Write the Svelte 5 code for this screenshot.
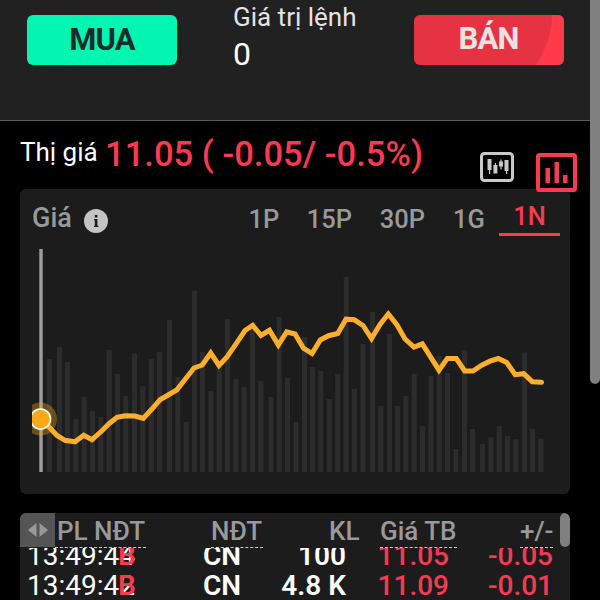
<script lang="ts">
    interface Trade {
        time: string;
        side: string;
        investor: string;
        volume: string;
        price: string;
        change: string;
    }

    const ranges: string[] = ["1P", "15P", "30P", "1G", "1N"];
    let activeRange: string = "1N";

    const trades: Trade[] = [
        { time: "13:49:44", side: "B", investor: "CN", volume: "100", price: "11.05", change: "-0.05" },
        { time: "13:49:42", side: "B", investor: "CN", volume: "4.8 K", price: "11.09", change: "-0.01" },
    ];

    const baseline = 472;

    // [x, top] of each volume bar
    const volumes: number[][] = [
        [47, 359], [57, 347], [65, 362], [73.3, 419], [81.7, 397], [90, 411], [98.3, 417],
        [106.7, 350], [115, 374], [123.3, 396], [132, 353.5], [140.3, 386], [148.7, 359],
        [157, 352], [167, 320], [175.3, 377], [183.7, 422], [192, 290.5], [200, 352],
        [208.4, 391], [216.7, 366], [225, 319], [233.4, 379], [241.7, 387], [250, 327],
        [258.4, 381], [268.4, 397], [276.7, 317], [285, 378], [293.5, 422], [302, 337],
        [310, 367], [318.4, 371], [326.7, 399], [335.2, 374], [343.6, 277], [352, 389],
        [360.4, 344], [370, 312], [378.3, 406], [387, 334], [395, 406], [403.4, 396],
        [411.7, 374], [420, 426], [428.4, 376], [436.7, 356], [445, 373], [453.4, 449],
        [462, 350.5], [470, 429], [480, 444], [488.4, 437.5], [496.7, 426], [505, 436],
        [513.4, 439], [522, 352.5], [530, 429], [538.4, 439],
    ];

    const prices: number[][] = [
        [40.5, 419], [50, 428], [57, 435.5], [65, 440.3], [75, 441.8], [83.7, 435.3], [92, 439.7],
        [101.7, 431], [109, 423.7], [117, 417.3], [125, 415.7], [135, 416], [143.3, 418.4],
        [151.7, 409.3], [160, 399.8], [176.7, 390], [185, 379.5], [194, 368], [202.3, 365],
        [210.7, 353], [219, 365.5], [227, 357], [235.7, 344.3], [245, 330.5], [252.7, 325.3],
        [261, 335.5], [269.5, 330.3], [278.3, 345], [286.7, 331.8], [295, 334], [303.5, 348.3],
        [312, 353.5], [320.3, 340], [328.5, 335.7], [337.7, 333.5], [346, 319.2], [354.3, 319.8],
        [363, 325.5], [371.5, 338.5], [380, 324.5], [388.3, 314], [397, 325], [405, 339],
        [414, 347], [422.3, 343.8], [439, 370.2], [447.3, 358.5], [456.3, 358.5], [464.7, 371],
        [473, 371], [481.7, 365.2], [490, 361.2], [498.3, 358.5], [506.7, 362.5], [515.2, 374.7],
        [523.7, 373.7], [532.3, 381.7], [541.5, 382.3],
    ];

    const line: string = prices.map((p) => p.join(",")).join(" ");
</script>

<div class="page">
    <header class="order">
        <button class="buy">MUA</button>
        <div class="total">
            <span class="total-label">Giá trị lệnh</span>
            <span class="total-value">0</span>
        </div>
        <button class="sell">
            <svg viewBox="0 0 150 50">
                <path d="M138 0 Q138 25 122 50 H150 V0Z" fill="#ff3b4b" />
            </svg>
            <span>BÁN</span>
        </button>
    </header>

    <div class="market">
        <span class="market-label">Thị giá</span>
        <span class="market-price">11.05 ( -0.05/ -0.5%)</span>
        <div class="views">
            <svg class="candles" viewBox="0 0 34 30">
                <rect x="1.5" y="1.5" width="31" height="27" rx="3" fill="none" stroke="#c9c9c9" stroke-width="3" />
                <path
                    d="M7.5 7h4v11h-4zM9 7h1.2v15H9zM13.4 13h4v8.5h-4zM14.8 11h1.2v3h-1.2zM19 9.5h4v5h-4zM20.4 7.5h1.2v10h-1.2zM24.5 8h4v11h-4zM26 8h1.2v14H26z"
                    fill="#c9c9c9"
                />
            </svg>
            <svg class="columns" viewBox="0 0 41 39">
                <rect x="2" y="2" width="37" height="35" rx="1.5" fill="none" stroke="#f93b51" stroke-width="4" />
                <path d="M9.5 15H14v15H9.5zM18.500 9H23v21h-4.500zM27 22h4.500v8H27z" fill="#f93b51" />
            </svg>
        </div>
    </div>

    <section class="card">
        <div class="card-head">
            <span class="card-title">Giá</span>
            <svg class="info" viewBox="0 0 24 24">
                <circle cx="12" cy="12" r="12" fill="#c4c4c4" />
                <path d="M10.8 6h2.600v2.500h-2.600zM10 10h3.400v6.800h1V18H10v-1.200h.8v-5.500H10z" fill="#1c1c1c" />
            </svg>
            <nav>
                {#each ranges as range}
                    <button class:active={range === activeRange} on:click={() => (activeRange = range)}>
                        {range}
                    </button>
                {/each}
            </nav>
        </div>
        <svg class="chart" viewBox="32 245 528 235">
            {#each volumes as [x, top]}
                <rect {x} y={top} width="5" height={baseline - top} fill="#2c2c2c" />
            {/each}
            <rect x="39.3" y="249" width="3.4" height="223" fill="#9d9d9d" />
            <circle cx="40.5" cy="419" r="16.5" fill="#fba919" opacity="0.35" />
            <polyline points={line} fill="none" stroke="#fcae2c" stroke-width="5" stroke-linecap="round" />
            <circle cx="40.5" cy="419" r="10" fill="#fba919" stroke="#fff" stroke-width="1.6" />
        </svg>
    </section>

    <section class="trades">
        <div class="trades-head">
            <div class="toggle">
                <svg viewBox="0 0 20 14">
                    <path d="M8.5 0v14L0 7zM11.5 0v14L20 7z" fill="#999" />
                </svg>
            </div>
            <span class="col-side">PL NĐT</span>
            <span class="col-investor">NĐT</span>
            <span class="col-volume">KL</span>
            <span class="col-price">Giá TB</span>
            <span class="col-change">+/-</span>
            <div class="thumb"></div>
        </div>
        <div class="rows">
            {#each trades as trade}
                <div class="row">
                    <span>{trade.time}</span>
                    <span class="down strong">{trade.side}</span>
                    <span class="strong">{trade.investor}</span>
                    <span class="strong right">{trade.volume}</span>
                    <span class="down medium right">{trade.price}</span>
                    <span class="down medium right">{trade.change}</span>
                </div>
            {/each}
        </div>
    </section>

    <div class="scrollbar"></div>
</div>

<style>
    :global(body) {
        margin: 0;
        background: #000;
    }

    .page {
        position: relative;
        width: 600px;
        height: 600px;
        overflow: hidden;
        background: #000;
        color: #fff;
        font-family: Roboto, sans-serif;
        white-space: nowrap;
    }

    button {
        border: 0;
        padding: 0;
        font-family: inherit;
        cursor: pointer;
    }

    svg {
        display: block;
        flex-shrink: 0;
    }

    /* Order bar */
    .order {
        box-sizing: border-box;
        height: 121px;
        padding-left: 27px;
        background: #212121;
        border-bottom: 1px solid #5a5a5a;
        display: flex;
        align-items: flex-start;
    }

    .buy,
    .sell {
        width: 150px;
        height: 50px;
        margin-top: 15px;
        border-radius: 6px;
        font-size: 31px;
        font-weight: 700;
        letter-spacing: -0.8px;
        line-height: 48px;
    }

    .buy {
        background: #02f6b2;
        color: #172d29;
    }

    .sell {
        display: grid;
        overflow: hidden;
        background: #e63343;
        color: #e8e3e0;
    }

    .sell > * {
        grid-area: 1 / 1;
    }

    .total {
        box-sizing: border-box;
        width: 236.5px;
        padding-left: 56px;
        display: flex;
        flex-direction: column;
    }

    .total-label {
        color: #e4e4e4;
        font-size: 26px;
        line-height: 34px;
    }

    .total-value {
        font-size: 32px;
        line-height: 40px;
    }

    /* Market price */
    .market {
        height: 68px;
        padding-left: 20px;
        display: flex;
        align-items: flex-start;
    }

    .market-label {
        width: 85px;
        font-size: 26px;
        line-height: 63px;
    }

    .market-price {
        width: 375px;
        color: #f93b51;
        font-size: 34.6px;
        font-weight: 500;
        line-height: 67px;
    }

    .views {
        position: relative;
        z-index: 1;
        padding-top: 31px;
        display: flex;
        gap: 22px;
    }

    .candles {
        width: 34px;
        height: 30px;
    }

    .columns {
        width: 41px;
        height: 39px;
        margin-top: 1px;
    }

    /* Chart */
    .card {
        box-sizing: border-box;
        width: 550px;
        height: 305px;
        margin-left: 20px;
        padding: 0 10px 0 12px;
        background: #1c1c1c;
        border-radius: 6px;
    }

    .card-head {
        height: 56px;
        display: flex;
        align-items: flex-start;
        color: #999;
    }

    .card-title {
        width: 52px;
        font-size: 27px;
        font-weight: 500;
        line-height: 58px;
    }

    .info {
        width: 24px;
        height: 24px;
        margin-top: 20px;
    }

    nav {
        margin-left: auto;
        display: flex;
    }

    nav button {
        width: 73px;
        height: 47px;
        padding-top: 4px;
        box-sizing: border-box;
        background: none;
        color: #999;
        font-size: 25.5px;
        font-weight: 500;
        line-height: 53px;
    }

    nav button:first-child {
        width: 58px;
    }

    nav button:nth-child(4) {
        width: 60px;
    }

    nav button.active {
        width: 61px;
        padding-top: 1px;
        border-bottom: 3px solid #f93b51;
        color: #f93b51;
    }

    .chart {
        width: 528px;
        height: 235px;
    }

    /* Trades */
    .trades {
        width: 550px;
        height: 90px;
        margin: 19px 0 0 20px;
        overflow: hidden;
        background: #1c1c1c;
        border-radius: 6px 6px 0 0;
    }

    .trades-head {
        height: 35px;
        display: flex;
        color: #999;
        font-size: 26px;
        font-weight: 500;
        line-height: 37px;
    }

    .trades-head span {
        box-sizing: border-box;
        height: 35px;
        border-bottom: 1px dashed #ccc;
    }

    .toggle {
        width: 35px;
        height: 34px;
        background: #555;
        display: flex;
        align-items: center;
        justify-content: center;
    }

    .toggle svg {
        width: 20px;
        height: 14px;
    }

    .col-side {
        width: 91px;
        padding-left: 2px;
    }

    .col-investor {
        width: 52px;
        margin-left: 65px;
    }

    .trades-head .col-volume {
        width: 51px;
        margin-left: 66px;
        border: 0;
    }

    .col-price {
        width: 77px;
    }

    .col-change {
        width: 33px;
        margin-left: 63px;
    }

    .thumb {
        width: 10px;
        height: 34px;
        margin-left: auto;
        border-radius: 5px;
        background: #808080;
    }

    .rows {
        height: 55px;
        overflow: hidden;
    }

    .row {
        height: 30px;
        padding-left: 7px;
        display: grid;
        grid-template-columns: 91px 85px 50px 93px 103px 104px;
        font-size: 28px;
        line-height: 29px;
    }

    .row:first-child {
        margin-top: -7px;
    }

    .strong {
        font-weight: 600;
    }

    .medium {
        font-weight: 500;
    }

    .right {
        text-align: right;
    }

    .down {
        color: #f93b51;
    }

    .scrollbar {
        position: absolute;
        top: -6px;
        right: 0;
        width: 10px;
        height: 390px;
        border-radius: 5px;
        background: #808080;
    }
</style>
